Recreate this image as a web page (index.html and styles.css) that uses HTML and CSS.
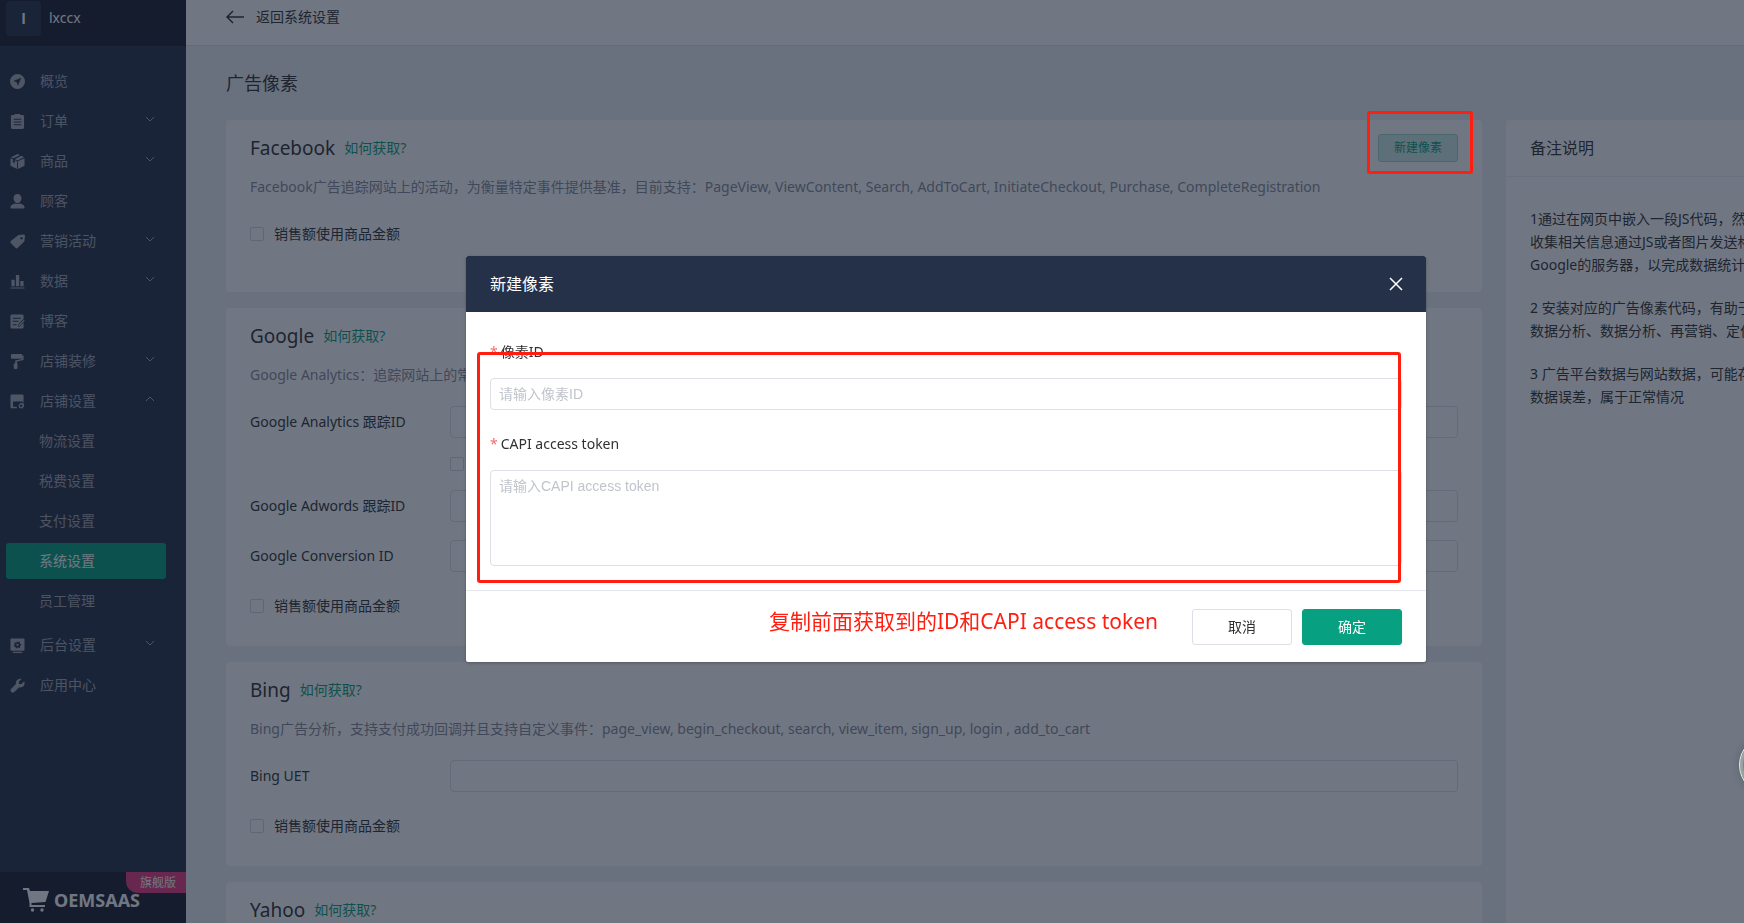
FILE: index.html
```html
<!DOCTYPE html>
<html lang="zh-CN">
<head>
<meta charset="utf-8">
<title>广告像素</title>
<link rel="stylesheet" href="styles.css">
</head>
<body>
<svg class="sprite" aria-hidden="true">
  <symbol id="down" viewBox="0 0 10 6"><path d="M1 1l4 4 4-4" fill="none" stroke="currentColor"/></symbol>
  <symbol id="up" viewBox="0 0 10 6"><path d="M1 5l4-4 4 4" fill="none" stroke="currentColor"/></symbol>
</svg>
<div class="app">
  <aside class="sidebar">
    <div class="brand"><span class="avatar">l</span><span class="shop">lxccx</span></div>
    <nav class="menu">
      <a class="item" href="#"><svg class="icon" viewBox="0 0 16 16"><path fill-rule="evenodd" d="M8 0a8 8 0 1 1 0 16A8 8 0 0 1 8 0zm4 4L3.500 7.500l3.600 1.400L8.500 12.500z"/></svg><span>概览</span></a>
      <a class="item" href="#"><svg class="icon" viewBox="0 0 16 16"><path fill-rule="evenodd" d="M2.500 1H5V0h6v1h2.500A1.500 1.500 0 0 1 15 2.500v12a1.500 1.500 0 0 1-1.500 1.500h-11A1.500 1.500 0 0 1 1 14.500v-12A1.500 1.500 0 0 1 2.500 1zM4 5v1h8V5zm0 3v1h8V8zm0 3v1h8v-1z"/></svg><span>订单</span><svg class="chev"><use href="#down"/></svg></a>
      <a class="item" href="#"><svg class="icon" viewBox="0 0 16 16"><path d="M8 0l2.500 1.200L3.600 4.500 1 3.400zM12 1.900l3 1.500-7 3.400-2.900-1.300zM.5 4.500l2.600 1.200v3l2 1V6.600l2.400 1.100V16l-7-3.500zM15.500 4.500v8l-7 3.500V7.700z"/></svg><span>商品</span><svg class="chev"><use href="#down"/></svg></a>
      <a class="item" href="#"><svg class="icon" viewBox="0 0 16 16"><path d="M8 0c2.600 0 4.200 1.800 4.200 4.400S10.500 9.500 8 9.500 3.800 7 3.800 4.400 5.400 0 8 0zM.5 13.500C1 11.500 4 10.500 6 10.200c1.300.6 2.700.6 4 0 2 .3 5 1.300 5.500 3.300v1a1 1 0 0 1-1 1h-13a1 1 0 0 1-1-1z"/></svg><span>顾客</span></a>
      <a class="item" href="#"><svg class="icon" viewBox="0 0 16 16"><path fill-rule="evenodd" d="M9 1l5.500-.5a1.500 1.500 0 0 1 1.500 1.500L15.300 8 8 15a1.500 1.500 0 0 1-2 0L.8 9.500a1.500 1.500 0 0 1 0-2zm3.200 2.200a1.300 1.300 0 1 0 .1 0z"/></svg><span>营销活动</span><svg class="chev"><use href="#down"/></svg></a>
      <a class="item" href="#"><svg class="icon" viewBox="0 0 16 16"><path d="M1.500 6H5v7H1.500zM6.300 1h3.500v12H6.300zM11 7.500h3.500V13H11zM.5 14.500h15v1H.5z"/></svg><span>数据</span><svg class="chev"><use href="#down"/></svg></a>
      <a class="item" href="#"><svg class="icon" viewBox="0 0 16 16"><path fill-rule="evenodd" d="M2 .5h11A1.500 1.500 0 0 1 14.500 2v3L9 11l-.5 2.500L11 13l3.500-4v5a1.500 1.500 0 0 1-1.500 1.500H2A1.500 1.500 0 0 1 .5 14V2A1.500 1.500 0 0 1 2 .5zM3 4v1h8.500V4zm0 3.300v1h6v-1zM3 11v1h4v-1zM14.700 6l1 .9-5 5.600-1.400.4.300-1.400z"/></svg><span>博客</span></a>
      <a class="item" href="#"><svg class="icon" viewBox="0 0 16 16"><path d="M2 0h10a1 1 0 0 1 1 1v.5h1.500V6.500L7.500 8v2H8v5a1 1 0 0 1-1 1H5a1 1 0 0 1-1-1v-5h1.500V6.800L13 5.200V4a1 1 0 0 1-1 1H2a1 1 0 0 1-1-1V1a1 1 0 0 1 1-1z"/></svg><span>店铺装修</span><svg class="chev"><use href="#down"/></svg></a>
      <a class="item" href="#"><svg class="icon" viewBox="0 0 16 16"><path fill-rule="evenodd" d="M2 .5h11A1.500 1.500 0 0 1 14.500 2v7h-1.200V7.500c-1 1-2.600 1-3.300 0-.7 1-2.600 1-3.300 0-.7 1-2.500 1-3.400 0V13.500h4v1.800H2A1.500 1.500 0 0 1 .5 14V2A1.500 1.500 0 0 1 2 .5zM11 9.500l3.300.4 1 2.600-2 2.900-3.300-.4-1-2.600zm.9 1.800a1.300 1.300 0 1 0 .1 0z"/></svg><span>店铺设置</span><svg class="chev"><use href="#up"/></svg></a>
      <div class="submenu">
        <a href="#">物流设置</a>
        <a href="#">税费设置</a>
        <a href="#">支付设置</a>
        <a class="active" href="#">系统设置</a>
        <a href="#">员工管理</a>
      </div>
      <a class="item" href="#"><svg class="icon" viewBox="0 0 16 16"><path fill-rule="evenodd" d="M1.500.5h13a1 1 0 0 1 1 1v11a1 1 0 0 1-1 1h-13a1 1 0 0 1-1-1v-11a1 1 0 0 1 1-1zM7.300 3.500v1L6.200 5l-1-.6-.8 1 .7.900-.2 1.200-.9.400.2 1.200h1.100l.8.800v1.100h1.200l.7-1 1 .1.900.7 1-.8-.4-1 .5-.9 1.100-.4-.1-1.100-1.100-.3-.5-.8.3-1.200-1-.5-.9.700-.8-.2-.2-.8zM8 6a1.200 1.200 0 1 1-.1 0zM3 14.700h10v1.300H3z"/></svg><span>后台设置</span><svg class="chev"><use href="#down"/></svg></a>
      <a class="item" href="#"><svg class="icon" viewBox="0 0 16 16"><path d="M12.500.8L9.500 4v2.500h2.700l3-3c1 3-.2 5.300-2.200 6.200-1.300.5-2.400.4-3.300.1l-5 5a2.300 2.300 0 0 1-3.400-3.300l5-5C5.500 3.500 8 .1 12.500.8z"/></svg><span>应用中心</span></a>
    </nav>
    <div class="footer">
      <svg class="cart" viewBox="0 0 26 24"><path d="M0 0h6l1 3h19l-3.500 11L8.500 15v2H22v2H6.500v-4L4 2H0z"/><circle cx="9.500" cy="22" r="1.700"/><circle cx="19" cy="22" r="1.700"/></svg>
      <span class="badge">旗舰版</span>
      <span class="logo">OEMSAAS</span>
    </div>
  </aside>

  <div class="page">
    <header class="topbar">
      <a class="back" href="#"><svg class="arrow" viewBox="0 0 18 14"><path d="M7 1L1 7l6 6M1 7h17" fill="none" stroke="currentColor" stroke-width="1.500"/></svg>返回系统设置</a>
    </header>
    <h1 class="title">广告像素</h1>
    <div class="columns">
      <main class="cards">
        <section class="card">
          <div class="head"><h2>Facebook</h2><a href="#">如何获取?</a><button class="new" type="button">新建像素</button></div>
          <p class="desc">Facebook广告追踪网站上的活动，为衡量特定事件提供基准，目前支持：PageView, ViewContent, Search, AddToCart, InitiateCheckout, Purchase, CompleteRegistration</p>
          <label class="check standalone"><input type="checkbox">销售额使用商品金额</label>
        </section>
        <section class="card">
          <div class="head"><h2>Google</h2><a href="#">如何获取?</a></div>
          <p class="desc">Google Analytics：追踪网站上的常规事件</p>
          <div class="row"><label for="ga">Google Analytics 跟踪ID</label><input id="ga" type="text"></div>
          <label class="check nested"><input type="checkbox">增强型电子商务</label>
          <div class="row"><label for="aw">Google Adwords 跟踪ID</label><input id="aw" type="text"></div>
          <div class="row next"><label for="gc">Google Conversion ID</label><input id="gc" type="text"></div>
          <label class="check"><input type="checkbox">销售额使用商品金额</label>
        </section>
        <section class="card">
          <div class="head"><h2>Bing</h2><a href="#">如何获取?</a></div>
          <p class="desc">Bing广告分析，支持支付成功回调并且支持自定义事件：page_view, begin_checkout, search, view_item, sign_up, login , add_to_cart</p>
          <div class="row"><label for="uet">Bing UET</label><input id="uet" type="text"></div>
          <label class="check"><input type="checkbox">销售额使用商品金额</label>
        </section>
        <section class="card">
          <div class="head"><h2>Yahoo</h2><a href="#">如何获取?</a></div>
        </section>
      </main>
      <aside class="notes">
        <h2>备注说明</h2>
        <div class="notes-body">
          <p>1通过在网页中嵌入一段JS代码，然<br>收集相关信息通过JS或者图片发送格<br>Google的服务器，以完成数据统计</p>
          <p>2 安装对应的广告像素代码，有助于<br>数据分析、数据分析、再营销、定位</p>
          <p>3 广告平台数据与网站数据，可能存<br>数据误差，属于正常情况</p>
        </div>
      </aside>
    </div>
  </div>
</div>

<div class="overlay">
  <form class="modal" role="dialog" aria-labelledby="dlg">
    <header class="modal-head"><h2 id="dlg">新建像素</h2><button class="close" type="button" aria-label="关闭"><svg viewBox="0 0 14 14"><path d="M1 1l12 12M13 1L1 13" fill="none" stroke="currentColor" stroke-width="1.500"/></svg></button></header>
    <div class="modal-body">
      <label for="pid"><span class="req">*</span>像素ID</label>
      <input id="pid" type="text" placeholder="请输入像素ID">
      <label for="token"><span class="req">*</span>CAPI access token</label>
      <textarea id="token" placeholder="请输入CAPI access token"></textarea>
      <div class="mark fields-mark"></div>
    </div>
    <footer class="modal-foot">
      <p class="hint">复制前面获取到的ID和CAPI access token</p>
      <button class="btn" type="button">取消</button>
      <button class="btn primary" type="button">确定</button>
    </footer>
  </form>
</div>
<div class="mark button-mark"></div>
<div class="bubble"></div>
</body>
</html>
```

FILE: styles.css
```css
* { box-sizing: border-box; margin: 0; }
body, button, input, textarea { font: 14px/24px "Noto Sans", "Noto Sans CJK SC", sans-serif; }
body { height: 100vh; overflow: hidden; color: #303133; background: #eeeff5; }
a { color: #07a181; text-decoration: none; }
h1, h2 { font-weight: 400; }
.sprite { position: absolute; width: 0; height: 0; }

.app { display: flex; height: 100vh; overflow: hidden; }
.sidebar { display: flex; flex-direction: column; flex: 0 0 186px; background: #253049; color: #fff; }
.brand { display: flex; gap: 8px; height: 46px; padding: 1px 6px; background: #171d2f; }
.avatar { width: 35px; height: 35px; border-radius: 4px; background: #253049; text-align: center; line-height: 35px; font-weight: 700; }
.shop { line-height: 34px; }
.menu { flex: 1; padding-top: 15px; }
.item { display: flex; align-items: center; height: 40px; padding: 0 31px 0 10px; color: #a2a5b0; }
.icon { width: 15px; height: 15px; margin-right: 15px; fill: #a7aab4; }
.chev { width: 10px; height: 6px; margin: 0 0 4px auto; }
.submenu { display: grid; gap: 4px; padding: 2px 20px 6px 6px; }
.submenu a { height: 36px; padding-left: 33px; line-height: 36px; border-radius: 3px; color: #a2a5b0; }
.submenu .active { background: #07a181; color: #fff; }
.footer { position: relative; display: flex; gap: 5px; height: 51px; padding: 16px 0 0 23px; background: #171d2f; }
.cart { width: 26px; height: 24px; fill: #fff; }
.logo { position: relative; font-weight: 700; font-size: 18px; }
.badge { position: absolute; top: 0; right: 0; width: 60px; height: 21px; padding-left: 4px; border-bottom-left-radius: 12px; background: #e6377d; font-size: 12px; line-height: 21px; text-align: center; }

.page { flex: 1; min-width: 0; }
.topbar { height: 46px; padding: 5px 40px; background: #fff; border-bottom: 1px solid #dcdfe6; }
.back { display: flex; align-items: center; gap: 12px; color: #303133; }
.arrow { width: 18px; height: 14px; }
.title { padding: 23px 40px; font-size: 18px; line-height: 28px; }
.columns { display: grid; grid-template-columns: minmax(0, 1fr) 238px; gap: 24px; padding-left: 40px; }
.cards { display: grid; gap: 16px; align-content: start; }
.card { padding: 14px 24px 28px; background: #fff; border-radius: 4px; }
.head { display: flex; align-items: center; gap: 9px; height: 28px; }
.head h2 { font-size: 19px; }
.new { width: 80px; height: 28px; margin-left: auto; border: 1px solid #9cd9cd; border-radius: 3px; background: #cdece6; color: #07a181; font-size: 12px; line-height: 24px; }
.desc { margin-top: 13px; color: #858a9a; white-space: nowrap; overflow: hidden; }
.row { display: flex; align-items: center; margin-top: 19px; }
.row label { width: 200px; }
.row input { flex: 1; height: 32px; border: 1px solid #dcdfe6; border-radius: 4px; background: transparent; }
.check { display: flex; align-items: center; gap: 10px; margin-top: 22px; }
.check input { appearance: none; width: 14px; height: 14px; margin: 0; border: 1px solid #d3d6e0; border-radius: 2px; }
.check.standalone { margin: 23px 0 18px; }
.check.nested { margin: 14px 0 14px 200px; }
.check.nested + .row { margin-top: 0; }
.row.next { margin-top: 18px; }

.notes { height: 100vh; background: #fff; border-radius: 4px 0 0 4px; overflow: hidden; white-space: nowrap; }
.notes h2 { height: 57px; padding-left: 24px; border-bottom: 1px solid #ebeef5; font-size: 16px; line-height: 57px; }
.notes-body { display: grid; gap: 20px; padding: 30px 0 0 24px; line-height: 23px; }

.overlay { position: fixed; inset: 0; display: flex; justify-content: center; align-items: flex-start; padding: 256px 0 0 148px; background: rgba(18, 28, 47, .6); }
.modal { width: 960px; background: #fff; border-radius: 2px; box-shadow: 0 1px 3px rgba(0, 0, 0, .3); overflow: hidden; }
.modal-head { display: flex; align-items: center; justify-content: space-between; height: 56px; padding: 0 23px 0 24px; background: #253049; color: #fff; }
.modal-head h2 { font-size: 16px; }
.close { width: 14px; height: 14px; padding: 0; border: 0; background: none; color: #fff; }
.close svg { display: block; }
.modal-body { position: relative; padding: 24px; border-bottom: 1px solid #e4e7ed; }
.modal-body label { display: block; margin-bottom: 10px; line-height: 32px; }
.req { margin-right: 3px; color: #f56c6c; }
.modal-body input, .modal-body textarea { display: block; width: 100%; height: 32px; padding: 3px 8px; border: 1px solid #dcdfe6; border-radius: 4px; resize: none; font-family: "Liberation Sans", "Noto Sans CJK SC", sans-serif; }
.modal-body input { margin-bottom: 18px; }
.modal-body textarea { height: 96px; }
::placeholder { color: #c0c4cc; opacity: 1; }
.modal-foot { display: flex; align-items: center; justify-content: flex-end; gap: 10px; padding: 18px 24px 17px; }
.hint { margin: 0 24px 12px 0; color: #ff1e10; font-size: 21px; }
.btn { width: 100px; height: 36px; border: 1px solid #dcdfe6; border-radius: 3px; background: #fff; color: #303133; }
.btn.primary { border-color: #07a181; background: #07a181; color: #fff; }
.mark { position: absolute; border: 3px solid #ff1e10; border-radius: 3px; pointer-events: none; }
.fields-mark { inset: 40px 25px 7px 11px; }
.button-mark { top: 111px; right: 271px; width: 106px; height: 63px; }
.bubble { position: fixed; top: 735px; right: -55px; width: 60px; height: 60px; border: 1px solid #e8e9eb; border-radius: 50%; background: #24b35f; box-shadow: inset 0 0 0 3px #9da0a8, 0 0 8px rgba(0, 0, 0, .2); }
```
